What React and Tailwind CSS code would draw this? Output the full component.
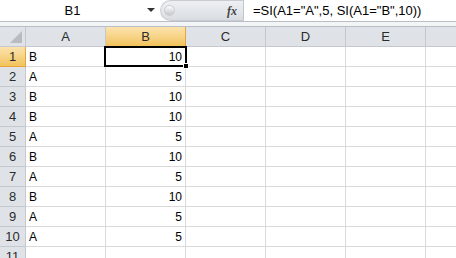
import React from "react";

const cols = ["A", "B", "C", "D", "E"];
const data = [
  ["B", 10], ["A", 5], ["B", 10], ["B", 10], ["A", 5],
  ["B", 10], ["A", 5], ["B", 10], ["A", 5], ["A", 5],
];

const hdr = "bg-[#dfe3e8] border-r border-b border-[#c5c9cf] flex items-center justify-center text-[#2b2b2b] text-[13px]";
const hdrSel = "bg-gradient-to-b from-[#fbe3ad] to-[#f2c35a] border-r border-b border-[#e5a53c] flex items-center justify-center text-[#2b2b2b] text-[13px]";

export default function App() {
  const font = { fontFamily: '"Liberation Sans", Arial, sans-serif' };
  return (
    <div className="w-[456px] h-[258px] overflow-hidden bg-white relative" style={font}>
      {/* formula bar */}
      <div className="flex h-[22px] border-b border-[#b9bec6] bg-white">
        <div className="w-[160px] flex items-center relative">
          <div className="w-[145px] text-center text-[13px] text-black leading-none">B1</div>
          <svg width="8" height="5" viewBox="0 0 8 5" className="ml-[2px]">
            <path d="M0 0H8L4 4Z" fill="#333" />
          </svg>
        </div>
        <div className="w-[83px] h-[21px] flex items-center rounded-l-[11px] border border-r-0 border-[#c7ccd3] bg-gradient-to-b from-[#eef0f3] to-[#d9dde2]">
          <div className="w-[11px] h-[11px] ml-[3px] rounded-full bg-gradient-to-b from-[#fdfdfd] to-[#c3c7cc] border border-[#c9cdd2]" />
          <div className="flex-1" />
          <span className="mr-[6px] text-[12px] italic font-bold text-[#444]" style={{ fontFamily: '"Liberation Serif", serif' }}>fx</span>
        </div>
        <div className="flex-1 border-l border-[#c2c6cc] flex items-center pl-[9px] text-[13px] text-black leading-none whitespace-nowrap">
          =SI(A1="A",5, SI(A1="B",10))
        </div>
      </div>
      <div className="h-[4px] bg-[#f3f4f6] border-b border-[#b9bec6] box-content" />
      {/* grid */}
      <div className="grid grid-cols-[26px_80px_80px_80px_80px_80px_1fr] auto-rows-[20px] text-[12px]">
        <div className="bg-[#dfe3e8] border-r border-b border-[#c5c9cf] relative">
          <svg width="12" height="12" className="absolute right-[3px] bottom-[3px]" viewBox="0 0 12 12">
            <path d="M12 0V12H0Z" fill="#b8bcc2" />
          </svg>
        </div>
        {cols.map((c) => (
          <div key={c} className={c === "B" ? hdrSel : hdr}>{c}</div>
        ))}
        <div className="bg-[#dfe3e8] border-b border-[#c5c9cf]" />
        {data.map(([a, b], i) => (
          <React.Fragment key={i}>
            <div className={i === 0 ? hdrSel : hdr}>{i + 1}</div>
            <div className="border-r border-b border-[#dadada] flex items-center pl-[3px] text-black">{a}</div>
            <div className="border-r border-b border-[#dadada] flex items-center justify-end pr-[3px] text-black">{b}</div>
            <div className="border-r border-b border-[#dadada]" />
            <div className="border-r border-b border-[#dadada]" />
            <div className="border-r border-b border-[#dadada]" />
            <div className="border-b border-[#dadada]" />
          </React.Fragment>
        ))}
        <div className={hdr}>11</div>
        <div className="border-r border-b border-[#dadada]" />
        <div className="border-r border-b border-[#dadada]" />
        <div className="border-r border-b border-[#dadada]" />
        <div className="border-r border-b border-[#dadada]" />
        <div className="border-r border-b border-[#dadada]" />
        <div className="border-b border-[#dadada]" />
      </div>
      {/* selection */}
      <div className="absolute left-[104px] top-[46px] w-[83px] h-[21px] border-2 border-black pointer-events-none" />
      <div className="absolute left-[183px] top-[63px] w-[6px] h-[6px] bg-black border border-white" />
    </div>
  );
}
